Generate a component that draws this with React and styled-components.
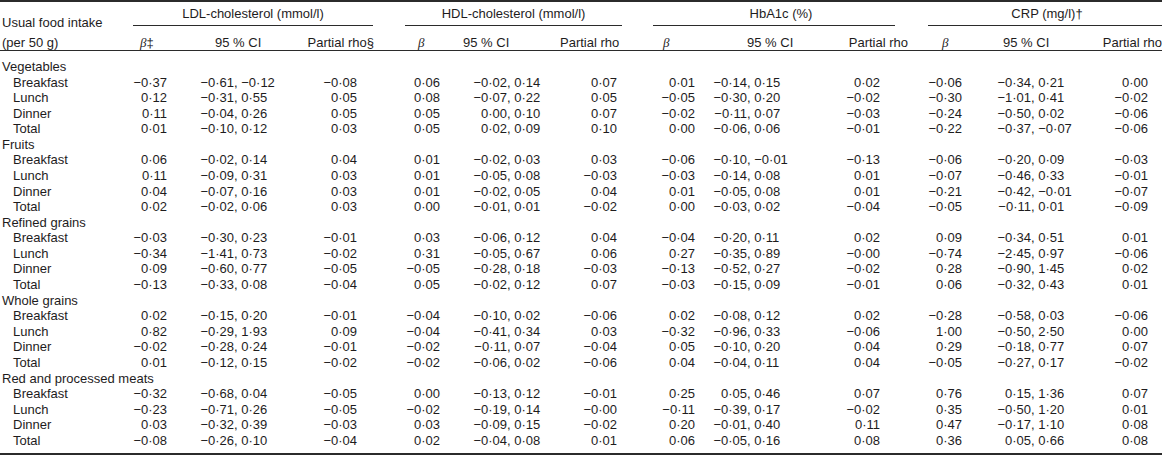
import React from 'react';
import styled, { createGlobalStyle } from 'styled-components';

const GlobalStyle = createGlobalStyle`
  html, body {
    margin: 0;
    padding: 0;
    background: #fff;
  }
  body {
    font-family: "Liberation Sans", Arial, sans-serif;
    font-size: 13px;
    color: #1e1c1d;
  }
`;

// stub | LDL (b, ci, rho) | gap | HDL | gap | HbA1c | gap | CRP
const COLS = '133px 34px 133px 73px 32px 35px 120px 62px 31px 42px 125px 75px 33px 34px 118px 82px';

const GROUPS = [
  { title: 'LDL-cholesterol (mmol/l)', col: 2, mark: '‡', rho: 'Partial rho§', titleShift: 0, betaHead: 7, ciPad: 33, rhoPad: 16, ciHead: 48, rhoHead: 1 },
  { title: 'HDL-cholesterol (mmol/l)', col: 6, mark: '', rho: 'Partial rho', titleShift: 0, betaHead: 13, ciPad: 33, rhoPad: 5, ciHead: 23, rhoHead: -8 },
  { title: 'HbA1c (%)', col: 10, mark: '', rho: 'Partial rho', titleShift: 14, betaHead: 10, ciPad: 18, rhoPad: 15, ciHead: 52, rhoHead: 13 },
  { title: 'CRP (mg/l)†', col: 14, mark: '', rho: 'Partial rho', titleShift: 4, betaHead: 14, ciPad: 35, rhoPad: 14, ciHead: 41, rhoHead: 0 },
];

const DATA = [
  ['Vegetables', [
    'Breakfast|-0.37 -0.61 -0.12 -0.08 0.06 -0.02 0.14 0.07 0.01 -0.14 0.15 0.02 -0.06 -0.34 0.21 0.00',
    'Lunch|0.12 -0.31 0.55 0.05 0.08 -0.07 0.22 0.05 -0.05 -0.30 0.20 -0.02 -0.30 -1.01 0.41 -0.02',
    'Dinner|0.11 -0.04 0.26 0.05 0.05 0.00 0.10 0.07 -0.02 -0.11 0.07 -0.03 -0.24 -0.50 0.02 -0.06',
    'Total|0.01 -0.10 0.12 0.03 0.05 0.02 0.09 0.10 0.00 -0.06 0.06 -0.01 -0.22 -0.37 -0.07 -0.06',
  ]],
  ['Fruits', [
    'Breakfast|0.06 -0.02 0.14 0.04 0.01 -0.02 0.03 0.03 -0.06 -0.10 -0.01 -0.13 -0.06 -0.20 0.09 -0.03',
    'Lunch|0.11 -0.09 0.31 0.03 0.01 -0.05 0.08 -0.03 -0.03 -0.14 0.08 0.01 -0.07 -0.46 0.33 -0.01',
    'Dinner|0.04 -0.07 0.16 0.03 0.01 -0.02 0.05 0.04 0.01 -0.05 0.08 0.01 -0.21 -0.42 -0.01 -0.07',
    'Total|0.02 -0.02 0.06 0.03 0.00 -0.01 0.01 -0.02 0.00 -0.03 0.02 -0.04 -0.05 -0.11 0.01 -0.09',
  ]],
  ['Refined grains', [
    'Breakfast|-0.03 -0.30 0.23 -0.01 0.03 -0.06 0.12 0.04 -0.04 -0.20 0.11 0.02 0.09 -0.34 0.51 0.01',
    'Lunch|-0.34 -1.41 0.73 -0.02 0.31 -0.05 0.67 0.06 0.27 -0.35 0.89 -0.00 -0.74 -2.45 0.97 -0.06',
    'Dinner|0.09 -0.60 0.77 -0.05 -0.05 -0.28 0.18 -0.03 -0.13 -0.52 0.27 -0.02 0.28 -0.90 1.45 0.02',
    'Total|-0.13 -0.33 0.08 -0.04 0.05 -0.02 0.12 0.07 -0.03 -0.15 0.09 -0.01 0.06 -0.32 0.43 0.01',
  ]],
  ['Whole grains', [
    'Breakfast|0.02 -0.15 0.20 -0.01 -0.04 -0.10 0.02 -0.06 0.02 -0.08 0.12 0.02 -0.28 -0.58 0.03 -0.06',
    'Lunch|0.82 -0.29 1.93 0.09 -0.04 -0.41 0.34 0.03 -0.32 -0.96 0.33 -0.06 1.00 -0.50 2.50 0.00',
    'Dinner|-0.02 -0.28 0.24 -0.01 -0.02 -0.11 0.07 -0.04 0.05 -0.10 0.20 0.04 0.29 -0.18 0.77 0.07',
    'Total|0.01 -0.12 0.15 -0.02 -0.02 -0.06 0.02 -0.06 0.04 -0.04 0.11 0.04 -0.05 -0.27 0.17 -0.02',
  ]],
  ['Red and processed meats', [
    'Breakfast|-0.32 -0.68 0.04 -0.05 0.00 -0.13 0.12 -0.01 0.25 0.05 0.46 0.07 0.76 0.15 1.36 0.07',
    'Lunch|-0.23 -0.71 0.26 -0.05 -0.02 -0.19 0.14 -0.00 -0.11 -0.39 0.17 -0.02 0.35 -0.50 1.20 0.01',
    'Dinner|0.03 -0.32 0.39 -0.03 0.03 -0.09 0.15 -0.02 0.20 -0.01 0.40 0.11 0.47 -0.17 1.10 0.08',
    'Total|-0.08 -0.26 0.10 -0.04 0.02 -0.04 0.08 0.01 0.06 -0.05 0.16 0.08 0.36 0.05 0.66 0.08',
  ]],
];

const fmt = (s) => s.replace('-', '\u2212').replace('.', '\u00b7');

const Table = styled.div`
  width: 1162px;
  border-top: 2px solid #2b2b2b;
  border-bottom: 2px solid #2b2b2b;
`;

const Head = styled.div`
  display: grid;
  grid-template-columns: ${COLS};
  grid-template-rows: auto auto;
  border-bottom: 1px solid #2b2b2b;
`;

const StubHead = styled.div`
  grid-column: 1;
  grid-row: 1 / 3;
  align-self: end;
  padding-left: 2px;
  margin-bottom: -2px;
  line-height: 19.5px;
  white-space: nowrap;
`;

const GroupTitle = styled.div`
  grid-column: ${(p) => p.$col} / span 3;
  grid-row: 1;
  padding: 4px 0 3px ${(p) => p.$shift}px;
  line-height: 15.6px;
  text-align: center;
  white-space: nowrap;
  border-bottom: 1px solid #2b2b2b;
`;

const SubHead = styled.div`
  grid-column: ${(p) => p.$col};
  grid-row: 2;
  padding: 9.2px 0 0.1px ${(p) => p.$pl || 0}px;
  margin-right: ${(p) => p.$mr || 0}px;
  line-height: 15.6px;
  text-align: ${(p) => p.$align};
  white-space: nowrap;
`;

const Beta = styled.span`
  font-family: "Liberation Serif", "Times New Roman", serif;
  font-style: italic;
`;

const Body = styled.div`
  padding: 7.5px 0 4.4px;
`;

const Row = styled.div`
  display: grid;
  grid-template-columns: ${COLS};
  height: 15.58px;
  line-height: 15.58px;
  white-space: nowrap;
`;

const Stub = styled.div`
  grid-column: 1;
  padding-left: ${(p) => p.$indent}px;
`;

const Num = styled.div`
  grid-column: ${(p) => p.$col};
  text-align: right;
  padding-right: ${(p) => p.$pr || 0}px;
`;

const Ci = styled.div`
  grid-column: ${(p) => p.$col};
  padding-left: ${(p) => p.$pl}px;
`;

const Lo = styled.span`
  display: inline-block;
  width: 34px;
  text-align: right;
`;

const DataRow = ({ label, values }) => {
  const nums = values.split(' ').map(fmt);
  return (
    <Row>
      <Stub $indent={13}>{label}</Stub>
      {GROUPS.map((g, i) => {
        const [b, lo, hi, rho] = nums.slice(i * 4, i * 4 + 4);
        return (
          <React.Fragment key={g.title}>
            <Num $col={g.col}>{b}</Num>
            <Ci $col={g.col + 1} $pl={g.ciPad}>
              <Lo>{lo}</Lo>, {hi}
            </Ci>
            <Num $col={g.col + 2} $pr={g.rhoPad}>{rho}</Num>
          </React.Fragment>
        );
      })}
    </Row>
  );
};

const App = () => {
  return (
    <>
      <GlobalStyle />
      <Table>
        <Head>
          <StubHead>
            Usual food intake
            <br />
            (per 50 g)
          </StubHead>
          {GROUPS.map((g) => (
            <React.Fragment key={g.title}>
              <GroupTitle $col={g.col} $shift={g.titleShift}>{g.title}</GroupTitle>
              <SubHead $col={g.col} $align="left" $pl={g.betaHead}>
                <Beta>β</Beta>
                {g.mark}
              </SubHead>
              <SubHead $col={g.col + 1} $align="left" $pl={g.ciHead}>
                95 % CI
              </SubHead>
              <SubHead $col={g.col + 2} $align="right" $mr={-g.rhoHead}>
                {g.rho}
              </SubHead>
            </React.Fragment>
          ))}
        </Head>
        <Body>
          {DATA.map(([cat, rows]) => (
            <React.Fragment key={cat}>
              <Row>
                <Stub $indent={2}>{cat}</Stub>
              </Row>
              {rows.map((r) => {
                const [label, values] = r.split('|');
                return <DataRow key={cat + label} label={label} values={values} />;
              })}
            </React.Fragment>
          ))}
        </Body>
      </Table>
    </>
  );
};

export default App;
